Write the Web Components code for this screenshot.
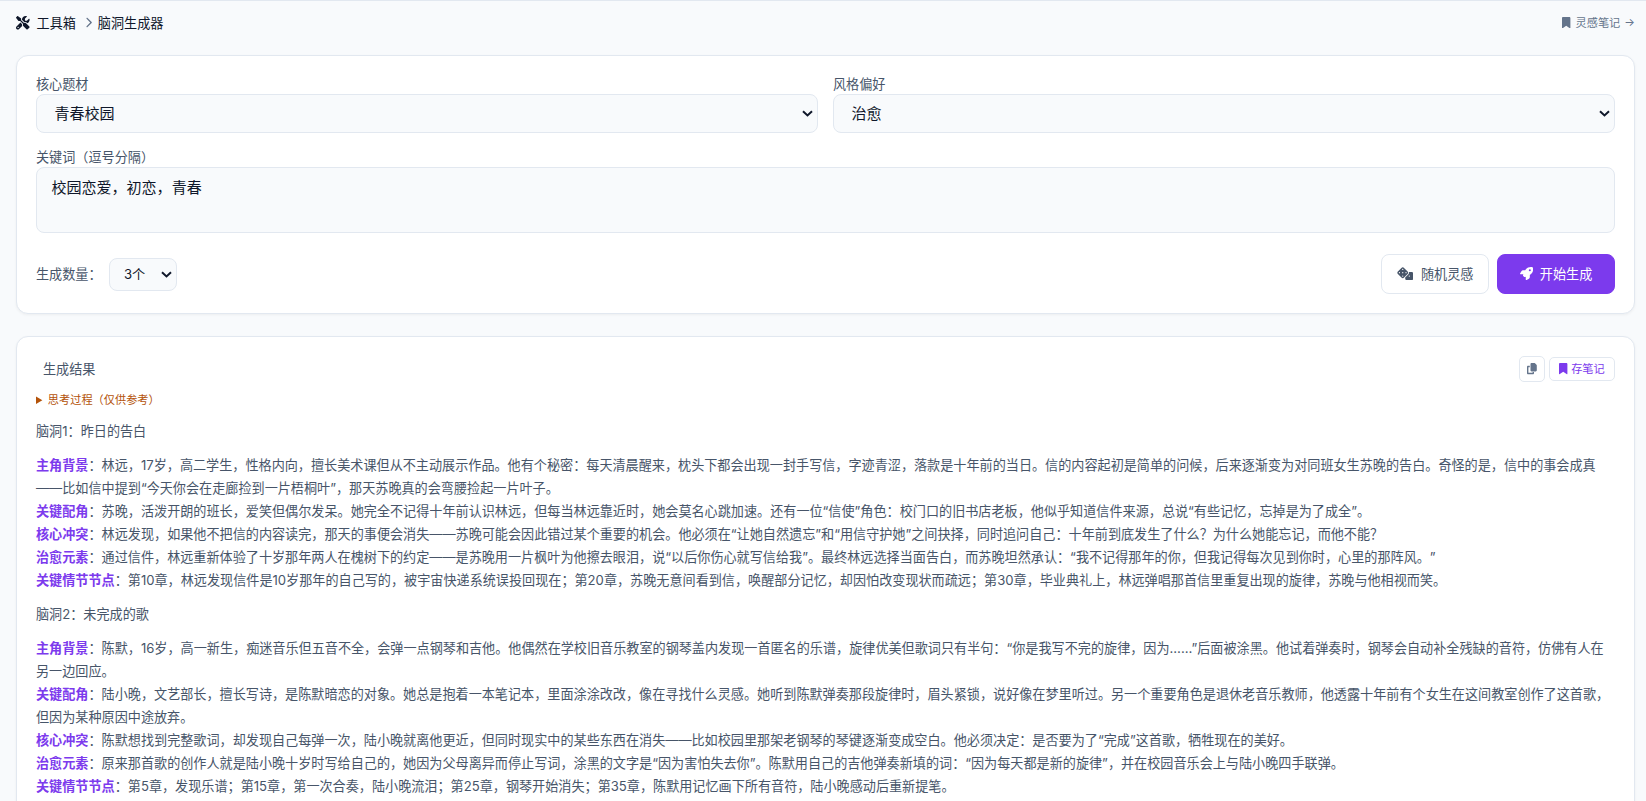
<!DOCTYPE html>
<html lang="zh-CN">
<head>
    <meta charset="UTF-8">
    <title>脑洞生成器</title>
    <style>
        body {
            margin: 0;
            height: 801px;
            overflow: hidden;
            background: #f8fafc;
            color: #0f172a;
            font-family: Inter, "Noto Sans CJK SC", sans-serif;
            font-size: 13.12px;
            text-spacing-trim: space-all;
        }
    </style>
</head>
<body>

<tool-page>
    <bread-crumb slot="top"></bread-crumb>
    <idea-form></idea-form>
    <result-panel>
        <idea-item name="脑洞1：昨日的告白">
            <idea-line label="主角背景">林远，17岁，高二学生，性格内向，擅长美术课但从不主动展示作品。他有个秘密：每天清晨醒来，枕头下都会出现一封手写信，字迹青涩，落款是十年前的当日。信的内容起初是简单的问候，后来逐渐变为对同班女生苏晚的告白。奇怪的是，信中的事会成真——比如信中提到“今天你会在走廊捡到一片梧桐叶”，那天苏晚真的会弯腰捡起一片叶子。</idea-line>
            <idea-line label="关键配角">苏晚，活泼开朗的班长，爱笑但偶尔发呆。她完全不记得十年前认识林远，但每当林远靠近时，她会莫名心跳加速。还有一位“信使”角色：校门口的旧书店老板，他似乎知道信件来源，总说“有些记忆，忘掉是为了成全”。</idea-line>
            <idea-line label="核心冲突">林远发现，如果他不把信的内容读完，那天的事便会消失——苏晚可能会因此错过某个重要的机会。他必须在“让她自然遗忘”和“用信守护她”之间抉择，同时追问自己：十年前到底发生了什么？为什么她能忘记，而他不能？</idea-line>
            <idea-line label="治愈元素">通过信件，林远重新体验了十岁那年两人在槐树下的约定——是苏晚用一片枫叶为他擦去眼泪，说“以后你伤心就写信给我”。最终林远选择当面告白，而苏晚坦然承认：“我不记得那年的你，但我记得每次见到你时，心里的那阵风。”</idea-line>
            <idea-line label="关键情节节点">第10章，林远发现信件是10岁那年的自己写的，被宇宙快递系统误投回现在；第20章，苏晚无意间看到信，唤醒部分记忆，却因怕改变现状而疏远；第30章，毕业典礼上，林远弹唱那首信里重复出现的旋律，苏晚与他相视而笑。</idea-line>
        </idea-item>
        <idea-item name="脑洞2：未完成的歌">
            <idea-line label="主角背景">陈默，16岁，高一新生，痴迷音乐但五音不全，会弹一点钢琴和吉他。他偶然在学校旧音乐教室的钢琴盖内发现一首匿名的乐谱，旋律优美但歌词只有半句：“你是我写不完的旋律，因为……”后面被涂黑。他试着弹奏时，钢琴会自动补全残缺的音符，仿佛有人在另一边回应。</idea-line>
            <idea-line label="关键配角">陆小晚，文艺部长，擅长写诗，是陈默暗恋的对象。她总是抱着一本笔记本，里面涂涂改改，像在寻找什么灵感。她听到陈默弹奏那段旋律时，眉头紧锁，说好像在梦里听过。另一个重要角色是退休老音乐教师，他透露十年前有个女生在这间教室创作了这首歌，但因为某种原因中途放弃。</idea-line>
            <idea-line label="核心冲突">陈默想找到完整歌词，却发现自己每弹一次，陆小晚就离他更近，但同时现实中的某些东西在消失——比如校园里那架老钢琴的琴键逐渐变成空白。他必须决定：是否要为了“完成”这首歌，牺牲现在的美好。</idea-line>
            <idea-line label="治愈元素">原来那首歌的创作人就是陆小晚十岁时写给自己的，她因为父母离异而停止写词，涂黑的文字是“因为害怕失去你”。陈默用自己的吉他弹奏新填的词：“因为每天都是新的旋律”，并在校园音乐会上与陆小晚四手联弹。</idea-line>
            <idea-line label="关键情节节点">第5章，发现乐谱；第15章，第一次合奏，陆小晚流泪；第25章，钢琴开始消失；第35章，陈默用记忆画下所有音符，陆小晚感动后重新提笔。</idea-line>
        </idea-item>
    </result-panel>
</tool-page>

<script>
  // name: [viewBox width, path], every icon is 512 units high
  const ICONS = {
    tools: [512, "M78.6 5C69.1-2.4 55.6-1.5 47 7L7 47c-8.5 8.5-9.4 22-2.1 31.6l80 104c4.5 5.9 11.6 9.4 19 9.4h54.1l109 109c-14.7 29-10 65.4 14.3 89.6l112 112c12.5 12.5 32.8 12.5 45.3 0l64-64c12.5-12.5 12.5-32.8 0-45.3l-112-112c-24.2-24.2-60.6-29-89.6-14.3l-109-109V104c0-7.5-3.5-14.5-9.4-19L78.6 5zM19.9 396.1C7.2 408.8 0 426.1 0 444.1C0 481.6 30.4 512 67.9 512c18 0 35.3-7.2 48-19.9L233.7 374.3c-7.8-20.9-9-43.6-3.6-65.1l-61.7-61.7L19.9 396.1zM512 144c0-10.5-1.1-20.7-3.2-30.5c-2.4-11.2-16.1-14.1-24.2-6l-63.9 63.9c-3 3-7.1 4.7-11.3 4.7H352c-8.8 0-16-7.2-16-16V102.6c0-4.2 1.7-8.3 4.7-11.3l63.9-63.9c8.1-8.1 5.2-21.8-6-24.2C388.7 1.1 378.5 0 368 0C288.5 0 224 64.5 224 144l0 .8 85.3 85.3c36-9.1 75.8 .5 104 28.7L429 274.5c49-23 83-72.8 83-130.5zM56 432a24 24 0 1 1 48 0 24 24 0 1 1 -48 0z"],
    chevron: [320, "M310.6 233.4c12.5 12.5 12.5 32.8 0 45.3l-192 192c-12.5 12.5-32.8 12.5-45.3 0s-12.5-32.8 0-45.3L242.7 256 73.4 86.6c-12.5-12.5-12.5-32.8 0-45.3s32.8-12.5 45.3 0l192 192z"],
    bookmark: [384, "M0 48V487.7C0 501.1 10.9 512 24.3 512c5 0 9.9-1.5 14-4.4L192 400 345.7 507.6c4.1 2.9 9 4.4 14 4.4c13.4 0 24.3-10.9 24.3-24.3V48c0-26.5-21.5-48-48-48H48C21.5 0 0 21.5 0 48z"],
    dice: [640, "M274.9 34.3c-28.1-28.1-73.7-28.1-101.8 0L34.3 173.1c-28.1 28.1-28.1 73.7 0 101.8L173.1 413.7c28.1 28.1 73.7 28.1 101.8 0L413.7 274.9c28.1-28.1 28.1-73.7 0-101.8L274.9 34.3zM200 224a24 24 0 1 1 48 0 24 24 0 1 1 -48 0zM96 200a24 24 0 1 1 0 48 24 24 0 1 1 0-48zM224 376a24 24 0 1 1 0-48 24 24 0 1 1 0 48zM352 200a24 24 0 1 1 0 48 24 24 0 1 1 0-48zM224 120a24 24 0 1 1 0-48 24 24 0 1 1 0 48zm96 328c0 35.3 28.7 64 64 64H576c35.3 0 64-28.7 64-64V256c0-35.3-28.7-64-64-64H461.7c11.6 36 3.1 77-25.4 105.5L320 413.8V448zM480 328a24 24 0 1 1 0 48 24 24 0 1 1 0-48z"],
    rocket: [512, "M156.6 384.9L125.7 354c-8.5-8.5-11.5-20.8-7.7-32.2c3-8.9 7-20.5 11.8-33.8L24 288c-8.6 0-16.6-4.6-20.9-12.1s-4.2-16.7 .2-24.1l52.5-88.5c13-21.9 36.5-35.3 61.9-35.3l82.3 0c2.4-4 4.8-7.7 7.2-11.3C289.1-4.1 411.1-8.1 483.9 5.3c11.6 2.1 20.6 11.2 22.8 22.8c13.4 72.9 9.3 194.8-111.4 276.7c-3.5 2.4-7.3 4.8-11.3 7.2v82.3c0 25.4-13.4 49-35.3 61.9l-88.5 52.5c-7.4 4.4-16.6 4.5-24.1 .2s-12.1-12.2-12.1-20.9V380.8c-14.1 4.9-26.4 8.9-35.7 11.9c-11.2 3.6-23.4 .5-31.8-7.8zM384 168a40 40 0 1 0 0-80 40 40 0 1 0 0 80z"],
    copy: [448, "M208 0L332.1 0c12.7 0 24.9 5.1 33.9 14.1l67.9 67.9c9 9 14.1 21.2 14.1 33.9L448 336c0 26.5-21.5 48-48 48l-192 0c-26.5 0-48-21.5-48-48l0-288c0-26.5 21.5-48 48-48zM48 128l80 0 0 64-64 0 0 256 192 0 0-32 64 0 0 48c0 26.5-21.5 48-48 48L48 512c-26.5 0-48-21.5-48-48L0 176c0-26.5 21.5-48 48-48z"]
  };


  function shadow(el, html) {
    el.attachShadow({mode: "open"});
    el.shadowRoot.innerHTML = html;
  }


  class FaIcon extends HTMLElement {
    connectedCallback() {
      if (this.shadowRoot) return;
      const [width, path] = ICONS[this.getAttribute("name")];
      shadow(this, `
        <style>
          :host { display: inline-flex; flex: none; }
          svg { display: block; height: 1em; width: ${width / 512}em; fill: currentColor; }
        </style>
        <svg viewBox="0 0 ${width} 512"><path d="${path}"/></svg>`);
    }
  }

  class ToolPage extends HTMLElement {
    constructor() {
      super();
      shadow(this, `
        <style>
          :host {
            display: flex;
            flex-direction: column;
            box-sizing: border-box;
            height: 801px;
            overflow: hidden;
            padding: 0 11px 0 16px;
            border-top: 1px solid #e2e8f0;
          }
          main { display: flex; flex-direction: column; flex: none; gap: 22px; }
        </style>
        <slot name="top"></slot>
        <main><slot></slot></main>`);
    }
  }

  class BreadCrumb extends HTMLElement {
    constructor() {
      super();
      shadow(this, `
        <style>
          :host { display: flex; flex: none; align-items: center; height: 42px; margin-bottom: 12px; }
          nav { display: flex; align-items: center; flex: 1; }
          fa-icon { margin-top: 2px; }
          .tools { font-size: 13.6px; margin-right: 7px; }
          .sep { font-size: 11px; color: #64748b; margin: 1px 6px 0 9px; }
          a { display: flex; align-items: center; font-size: 11.2px; color: #64748b; }
          a fa-icon { margin: 1px 5px 0 0; }
          a span { margin-left: 4px; }
        </style>
        <nav>
          <fa-icon class="tools" name="tools"></fa-icon>工具箱
          <fa-icon class="sep" name="chevron"></fa-icon>脑洞生成器
        </nav>
        <a><fa-icon name="bookmark"></fa-icon>灵感笔记<span>→</span></a>`);
    }
  }

  class UiCard extends HTMLElement {
    constructor() {
      super();
      shadow(this, `
        <style>
          :host {
            display: block;
            box-sizing: border-box;
            background: #fff;
            border: 1px solid #e2e8f0;
            border-radius: 12px;
            padding: 19px;
            box-shadow: 0 1px 3px rgba(0, 0, 0, 0.05);
          }
        </style>
        <slot></slot>`);
    }
  }

  class UiButton extends HTMLElement {
    constructor() {
      super();
      shadow(this, `
        <style>
          :host { display: block; }
          button {
            display: flex;
            align-items: center;
            justify-content: center;
            box-sizing: border-box;
            width: var(--w);
            height: var(--h, 40px);
            gap: var(--gap, 7px);
            padding: 0 0 2px;
            font: inherit;
            color: inherit;
            background: var(--bg, #fff);
            border: 1px solid var(--line, #e2e8f0);
            border-radius: var(--r, 8px);
          }
          ::slotted(fa-icon) { margin-top: 2px; }
        </style>
        <button><slot></slot></button>`);
    }
  }

  // select with its own arrow, both share one grid cell
  class UiSelect extends HTMLElement {
    constructor() {
      super();
      shadow(this, `
        <style>
          :host { display: grid; align-items: center; font-size: 15.04px; color: #0f172a; }
          select, svg { grid-area: 1 / 1; }
          select {
            appearance: none;
            box-sizing: border-box;
            width: 100%;
            height: var(--h, 39px);
            margin: 0;
            padding: 0 20px 0 var(--pad, 17.4px);
            font: inherit;
            color: inherit;
            background: #f8fafc;
            border: 1px solid #e2e8f0;
            border-radius: 8px;
          }
          svg {
            justify-self: end;
            width: 11px;
            height: 7px;
            margin-right: 5px;
            fill: none;
            stroke: currentColor;
            stroke-width: 2;
            pointer-events: none;
          }
        </style>
        <select><option>${this.getAttribute("value")}</option></select>
        <svg viewBox="0 0 11 7"><path d="M1 1.2 5.5 5.4 10 1.2"/></svg>`);
    }
  }

  class IdeaForm extends HTMLElement {
    constructor() {
      super();
      shadow(this, `
        <style>
          :host { display: block; }
          ui-card { height: 259px; }
          .row { display: grid; grid-template-columns: 1fr 1fr; gap: 15px; margin-bottom: 15px; }
          label { display: block; height: 19px; line-height: 19px; color: #475569; }
          textarea {
            display: block;
            box-sizing: border-box;
            width: 100%;
            height: 66px;
            margin: 0;
            padding: 8px 14.4px;
            font: inherit;
            font-size: 15.04px;
            line-height: 23px;
            color: #0f172a;
            background: #f8fafc;
            border: 1px solid #e2e8f0;
            border-radius: 8px;
            resize: none;
          }
          .actions { display: flex; align-items: center; margin-top: 21px; color: #475569; }
          .actions span { padding-bottom: 2px; }
          .count { --h: 33px; --pad: 14.4px; width: 68px; margin-left: 7px; font-size: 13.12px; }
          .buttons { display: flex; gap: 8px; margin-left: auto; }
          .random { --w: 108px; --gap: 8px; }
          .start { --w: 118px; --bg: #7c3aed; --line: #7c3aed; color: #fff; }
        </style>
        <ui-card>
          <div class="row">
            <div>
              <label>核心题材</label>
              <ui-select value="青春校园"></ui-select>
            </div>
            <div>
              <label>风格偏好</label>
              <ui-select value="治愈"></ui-select>
            </div>
          </div>
          <label>关键词（逗号分隔）</label>
          <textarea>校园恋爱，初恋，青春</textarea>
          <div class="actions">
            <span>生成数量：</span>
            <ui-select class="count" value="3个"></ui-select>
            <div class="buttons">
              <ui-button class="random"><fa-icon name="dice"></fa-icon>随机灵感</ui-button>
              <ui-button class="start"><fa-icon name="rocket"></fa-icon>开始生成</ui-button>
            </div>
          </div>
        </ui-card>`);
    }
  }

  class ResultPanel extends HTMLElement {
    constructor() {
      super();
      shadow(this, `
        <style>
          :host { display: block; color: #475569; }
          ui-card { height: 600px; }
          header { display: flex; align-items: center; height: 26px; gap: 4px; }
          h3 { flex: 1; margin: 0 0 2px 7px; font-size: 13.12px; font-weight: 400; }
          .copy { --w: 26px; --h: 26px; --r: 5px; font-size: 11.2px; color: #64748b; }
          .save { --w: 66px; --h: 24px; --r: 5px; --gap: 3.5px; font-size: 11.2px; color: #7c3aed; }
          summary { height: 20px; margin: 8px 0 10px; line-height: 21px; font-size: 11.2px; color: #b45309; }
        </style>
        <ui-card>
          <header>
            <h3>生成结果</h3>
            <ui-button class="copy"><fa-icon name="copy"></fa-icon></ui-button>
            <ui-button class="save"><fa-icon name="bookmark"></fa-icon>存笔记</ui-button>
          </header>
          <details><summary>思考过程（仅供参考）</summary></details>
          <slot></slot>
        </ui-card>`);
    }
  }

  class IdeaItem extends HTMLElement {
    constructor() {
      super();
      shadow(this, `
        <style>
          :host { display: block; margin-bottom: 11.2px; line-height: 23px; }
          h4 { margin: 0 0 11px; font-size: inherit; font-weight: 400; }
        </style>
        <h4>${this.getAttribute("name")}</h4>
        <slot></slot>`);
    }
  }

  class IdeaLine extends HTMLElement {
    constructor() {
      super();
      shadow(this, `
        <style>
          :host { display: block; }
          b { color: #7c3aed; font-weight: 600; }
        </style>
        <b>${this.getAttribute("label")}</b>：<slot></slot>`);
    }
  }

  customElements.define("fa-icon", FaIcon);
  customElements.define("ui-card", UiCard);
  customElements.define("ui-button", UiButton);
  customElements.define("ui-select", UiSelect);
  customElements.define("tool-page", ToolPage);
  customElements.define("bread-crumb", BreadCrumb);
  customElements.define("idea-form", IdeaForm);
  customElements.define("result-panel", ResultPanel);
  customElements.define("idea-item", IdeaItem);
  customElements.define("idea-line", IdeaLine);
</script>
</body>
</html>
